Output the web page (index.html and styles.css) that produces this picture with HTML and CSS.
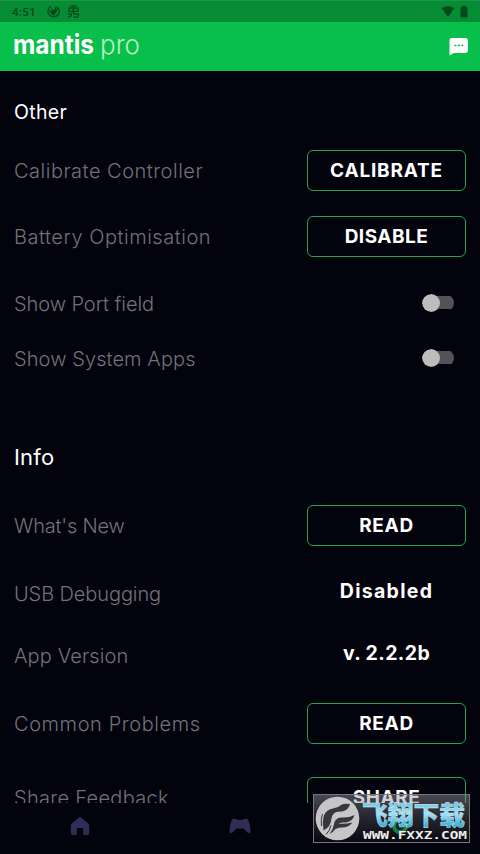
FILE: index.html
```html
<!DOCTYPE html>
<html lang="en">
<head>
<meta charset="utf-8">
<title>mantis pro</title>
<link rel="stylesheet" href="styles.css">
</head>
<body>
<div class="app">
  <div class="status">
    <span class="clock">4:51</span>
    <svg class="s-flame" width="13" height="13" viewBox="0 0 13 13"><path d="M4 1.300A5.600 5.600 0 1 0 9.500 1.500" fill="none" stroke="#04491a" stroke-width="1.300"/><path d="M2 4.500l2.800 2.200L4 2.500l2.500 3 1.800-5 .5 3.500 2.500-1.500-2 5-2.800 3.500-3-3z" fill="#04491a"/></svg>
    <svg class="s-bug" width="13" height="13" viewBox="0 0 13 13" fill="none" stroke="#04491a" stroke-width="1.300"><path d="M3.500.8h6M2 3h9v3.300H2zM6.500 1v8.500M.8 8.800h3.500v1.500q0 1.500-3 1.700M6.500 8.800h4.700v2.500q-1 1.500-4.500.7"/></svg>
    <span class="spacer"></span>
    <svg width="14" height="12" viewBox="0 0 14 12"><path d="M.5 2Q7-1.500 13.500 2L7 11z" fill="#04491a"/></svg>
    <svg class="s-batt" width="8" height="13" viewBox="0 0 8 13"><path d="M2.500.5h3V2H7.500v10.500H.5V2h2z" fill="#04491a"/></svg>
  </div>
  <header class="bar">
    <svg class="logo" width="128" height="36" viewBox="0 0 128 36"><text class="logo-b" x="-1" y="25" textLength="81" lengthAdjust="spacingAndGlyphs">mantis</text><text class="logo-l" x="86" y="25" textLength="40" lengthAdjust="spacingAndGlyphs">pro</text></svg>
    <svg width="20" height="18" viewBox="0 0 20 18"><path d="M3 0h13q3 0 3 3v9q0 3-3 3H5L.5 17.500V3Q.5 0 3 0z" fill="#fff"/><path d="M5.300 7.500h2M8.800 7.500h2M12.300 7.500h2" stroke="#08bf4b" stroke-width="1.600"/></svg>
  </header>
  <main class="content">
    <section class="other">
      <h2 class="t-other">Other</h2>
      <div class="row h66"><span class="label l1">Calibrate Controller</span><button class="b1">CALIBRATE</button></div>
      <div class="row h66"><span class="label l2">Battery Optimisation</span><button class="b2">DISABLE</button></div>
      <div class="row toggle-row first"><span class="label l3">Show Port field</span><span class="switch"></span></div>
      <div class="row toggle-row"><span class="label l4">Show System Apps</span><span class="switch"></span></div>
    </section>
    <section class="info">
      <h2 class="t-info">Info</h2>
      <div class="row h68"><span class="label l5">What's New</span><button>READ</button></div>
      <div class="row h68"><span class="label l6">USB Debugging</span><span class="value v1">Disabled</span></div>
      <div class="row h56"><span class="label l7">App Version</span><span class="value v2">v. 2.2.2b</span></div>
      <div class="row h80"><span class="label l8">Common Problems</span><button>READ</button></div>
      <div class="row h68"><span class="label l9">Share Feedback</span><button class="b2">SHARE</button></div>
    </section>
  </main>
  <nav class="tabs">
    <span><svg width="20" height="20" viewBox="0 0 20 20"><path d="M10 1q.7 0 1.300.6l7 6.200q.9.800.9 2V17q0 2-2 2h-4v-5.500q0-1.500-1.500-1.500H8.300q-1.500 0-1.500 1.500V19H2.800q-2 0-2-2V9.800q0-1.200.9-2l7-6.200Q9.300 1 10 1z" fill="#2e2d55"/></svg></span>
    <span><svg width="22" height="16" viewBox="0 0 22 16"><path d="M4.500.8h2l1.500 1h6l1.500-1h2q1.300 0 2 1.700Q21.500 8 21.500 13q0 2.200-1.600 2.200-.8 0-1.900-1.200l-3.500-3.600h-7L4 14q-1.100 1.200-1.900 1.200Q.5 15.200.5 13 .5 8 2.500 2.500 3.200.8 4.500.8z" fill="#2e2d55"/></svg></span>
    <span><svg width="22" height="22" viewBox="0 0 22 22"><circle cx="11" cy="11" r="6" fill="none" stroke="#08bf4b" stroke-width="4"/></svg></span>
  </nav>
  <div class="mark">
    <svg width="157" height="49" viewBox="0 0 157 49">
      <defs><linearGradient id="g" x1="0" y1="0" x2="0" y2="1"><stop offset=".2" stop-color="#6cc4e4"/><stop offset=".5" stop-color="#a5e0f3"/><stop offset=".85" stop-color="#35abd9"/></linearGradient></defs>
      <circle cx="24.500" cy="24.500" r="21.800" fill="#c6c6c8"/>
      <path d="M10.500 35.500Q9 27 11 21.500 13.500 15.500 20 14.500q5-.5 8-3.500 3-2 9-1-1 5-6 7-3 1-6 .8-5 .2-6.500 6.200-.5 9-8 12.500zM16.500 40q4-5 4.500-10 1-6 7-6.500 8 .5 13.500-2.500-2 7-9 7.500-4-.5-7 1 5 1 14-1-4 5-10 5-4-.5-7 1.500-2 3-6 5z" fill="#37373c"/>
      <path d="M8.500 32q-1-7 1-12M13 40.500q4-4 5-9" fill="none" stroke="#37373c"/>
      <text class="cn" x="49" y="31" textLength="103" lengthAdjust="spacingAndGlyphs">飞翔下载</text>
      <text class="url" x="50" y="45" textLength="104" lengthAdjust="spacingAndGlyphs">WWW.FXXZ.COM</text>
    </svg>
  </div>
</div>
</body>
</html>
```
FILE: styles.css
```css
* { box-sizing: border-box; }
body { margin: 0; background: #03030e; font-family: Inter, sans-serif; }
.app { position: relative; width: 480px; height: 854px; overflow: hidden; background: #03030e; display: flex; flex-direction: column; }
.status { height: 22px; background: #068c34; border-top: 1px solid #1d9748; display: flex; align-items: center; padding: 0 12px; flex: none; color: #04491a; }
.clock { font: 500 11.5px/20px Roboto, sans-serif; letter-spacing: .4px; width: 25px; margin-right: 10px; }
.s-bug { margin-left: 7px; }
.s-batt { margin-left: 5px; }
.spacer { flex: 1; }
.bar { height: 49px; flex: none; background: #08bf4b; display: flex; align-items: center; justify-content: space-between; padding: 0 11px 0 14px; }
.logo { overflow: visible; }
.logo text { font-family: Inter, sans-serif; font-size: 26px; fill: #fff; }
.logo .logo-b { font-weight: 700; }
.logo .logo-l { font-weight: 300; fill: #b3efc8; }
.content { height: 732px; flex: none; overflow: hidden; padding: 20px 14px 0; }
h2 { margin: 0; color: #fff; font-weight: 400; height: 40px; line-height: 42px; }
.t-other { font-size: 19.5px; letter-spacing: .35px; margin-bottom: 6px; }
.t-info { font-size: 22px; letter-spacing: .2px; margin-bottom: 15px; }
.info { margin-top: 51px; }
.row { display: flex; align-items: center; justify-content: space-between; }
.h66 { height: 66px; }
.h68 { height: 68px; }
.h56 { height: 56px; }
.h80 { height: 80px; }
.toggle-row { height: 55px; padding-right: 12px; }
.first { margin-top: 6px; }
.label { color: #727277; font-size: 20px; font-weight: 300; line-height: 30px; white-space: nowrap; padding-top: 2px; }
.info .label { padding-top: 1px; }
.l1 { letter-spacing: .5px; }
.l2 { letter-spacing: .52px; }
.l3 { letter-spacing: -.07px; }
.l4 { letter-spacing: .08px; }
.l5 { letter-spacing: -.2px; }
.l6 { letter-spacing: -.1px; }
.l7 { letter-spacing: .12px; }
.l8 { letter-spacing: .58px; }
.l9 { letter-spacing: .3px; }
button { width: 159px; height: 41px; padding: 0; border: 1px solid #25a44f; border-radius: 6px; background: none; color: #fff; font: 700 19px/39px Inter, sans-serif; letter-spacing: .7px; }
.b1 { letter-spacing: .8px; }
.b2 { letter-spacing: .5px; }
.value { width: 159px; text-align: center; color: #fff; font-size: 19.5px; font-weight: 700; margin-top: -4px; }
.v1 { letter-spacing: 1.3px; }
.v2 { letter-spacing: .4px; }
.switch { width: 32px; height: 18px; display: flex; align-items: center; border-radius: 9px; background: linear-gradient(#525257, #525257) 10px 50% / 22px 13px no-repeat; overflow: hidden; }
.switch::before { content: ""; width: 18px; height: 18px; border-radius: 50%; background: #bdbdbd; }
.tabs { height: 51px; display: grid; grid-template-columns: repeat(3, 1fr); place-items: center; padding-bottom: 6px; }
.tabs span { display: flex; }
.mark { position: absolute; left: 313px; top: 794px; width: 157px; height: 49px; background: linear-gradient(#a0a0a870, #50505570 50%, #10101870); border: 1px solid #75757b; }
.mark svg { display: block; margin: -1px; }
.cn { font: 900 26px "Noto Sans CJK SC", sans-serif; fill: url(#g); stroke: #d8f2fb; stroke-width: .4px; }
.url { font: 700 11px "DejaVu Sans Mono", monospace; fill: #eee; }
```
